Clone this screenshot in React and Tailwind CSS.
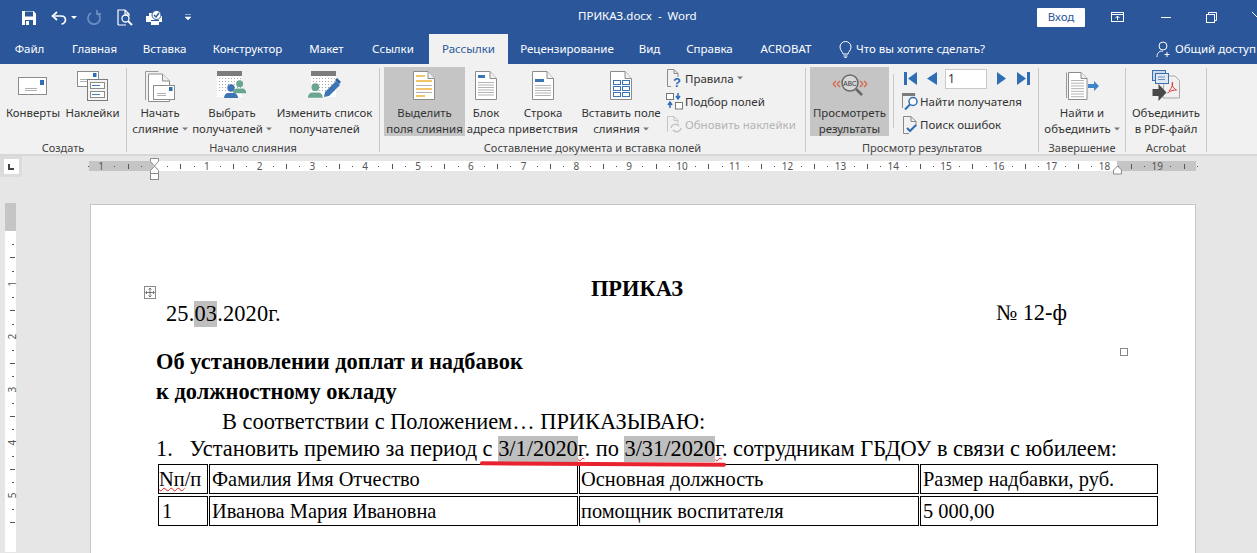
import React from "react";

const Caret = () => (
  <svg width="6" height="4" viewBox="0 0 6 4" className="inline-block ml-[3px] mb-[2px]"><path d="M0 0.5h6L3 3.5z" fill="#7a7a7a" /></svg>
);

const Sep = () => <div className="w-px h-[84px] mt-[4px] bg-[#c8c8c8] shrink-0" />;

const Group = ({ w, label, children }) => (
  <>
    <div className="flex flex-col shrink-0 h-full" style={{ width: w }}>
      <div className="flex h-[76px] pt-[3px] shrink-0">{children}</div>
      <div className="text-center text-[11px] leading-[15px] text-[#444] whitespace-nowrap shrink-0">{label}</div>
    </div>
    <Sep />
  </>
);

const Big = ({ w, icon, lines, caret, active }) => (
  <div className={`flex flex-col items-center shrink-0 h-[69px] ${active ? "bg-[#c5c5c5]" : ""}`} style={{ width: w }}>
    <div className="h-[38px] flex items-center justify-center shrink-0">{icon}</div>
    {lines.map((l, i) => (
      <div key={i} className="leading-[16px] text-[11.4px] text-[#333] whitespace-nowrap">
        {l}
        {caret && i === lines.length - 1 ? <Caret /> : null}
      </div>
    ))}
  </div>
);

const Small = ({ icon, text, caret, dim, tight }) => (
  <div className={`flex items-center h-[23px] text-[11.5px] whitespace-nowrap ${dim ? "text-[#b4b4b4]" : "text-[#333]"}`}>
    <div className={`${tight ? "w-[18px]" : "w-[20px]"} flex justify-center shrink-0`}>{icon}</div>
    <span className="ml-[1px]">{text}</span>
    {caret ? <Caret /> : null}
  </div>
);

const Env = ({ x = 0, y = 0 }) => (
  <g transform={`translate(${x} ${y})`}>
    <rect x=".5" y=".5" width="28" height="17" fill="#fff" stroke="#8c8c8c" />
    <rect x="22" y="3" width="4" height="5" fill="#2f6eb5" />
    <path d="M7 11.5h12M7 13.5h12" stroke="#b0b0b0" />
  </g>
);

const IEnvelope = () => <svg width="30" height="19"><Env /></svg>;

const ILabels = () => (
  <svg width="31" height="30">
    <rect x=".5" y=".5" width="21" height="15" fill="#fff" stroke="#8c8c8c" />
    <rect x="16" y="2" width="3.5" height="4" fill="#2f6eb5" />
    <path d="M3 8.5h10M3 10.5h10" stroke="#b0b0b0" />
    <rect x="10.5" y="8.5" width="20" height="21" fill="#f4f4f4" stroke="#7c7c7c" />
    <rect x="13.5" y="11.5" width="14" height="6" fill="#fff" stroke="#8c8c8c" />
    <rect x="13.5" y="20.5" width="14" height="6" fill="#fff" stroke="#8c8c8c" />
    <path d="M15 14.5h8M15 23.5h8" stroke="#3d7cc0" />
  </svg>
);

const IStart = () => (
  <svg width="31" height="31">
    <path d="M.5 29V.5h13" fill="none" stroke="#9a9a9a" />
    <path d="M3.5 30.5V3h14l7 7v20.5z" fill="#fff" stroke="#8c8c8c" />
    <path d="M17.5 3v7h7" fill="#eee" stroke="#8c8c8c" />
    <g transform="translate(8 14)"><rect x=".5" y=".5" width="21" height="14" fill="#fff" stroke="#8c8c8c" /><rect x="16" y="2" width="3.5" height="4" fill="#2f6eb5" /><path d="M4 8.5h9M4 10.5h9" stroke="#b0b0b0" /></g>
  </svg>
);

const Dots = ({ w }) => {
  const d = [];
  for (let r = 0; r < 5; r++) for (let c = 0; c < w; c++) d.push(<rect key={`${r}${c}`} x={2 + c * 3} y={7 + r * 3} width="1" height="1" fill="#a8a8a8" />);
  return <>{d}</>;
};

const Person = ({ x, y, color, s = 1 }) => (
  <g transform={`translate(${x} ${y}) scale(${s})`}>
    <circle cx="7" cy="4" r="3.7" fill={color} />
    <path d="M0 14c0-3 2-5 4-5h6c2 0 4 2 4 5z" fill={color} />
  </g>
);

const ISelect = () => (
  <svg width="30" height="30">
    <rect x="0" y="0" width="25" height="26" fill="#fff" stroke="none" />
    <rect x="0" y="0" width="25" height="5" fill="#7c7c7c" />
    <Dots w={8} />
    <Person x="16" y="9" color="#6aa68f" s="0.95" />
    <Person x="7" y="13" color="#3d74b4" />
  </svg>
);

const IEdit = () => (
  <svg width="33" height="30">
    <rect x="3" y="0" width="25" height="26" fill="#fff" />
    <rect x="3" y="0" width="25" height="5" fill="#7c7c7c" />
    <g transform="translate(3 0)"><Dots w={8} /></g>
    <Person x="0" y="12" color="#6aa68f" s="1.05" />
    <path d="M17 21l11-11 4 4-11 11-5 1z" fill="#3d74b4" />
    <path d="M27 9l2-2 4 4-2 2z" fill="#2f5f9e" />
  </svg>
);

const Doc = ({ children, w = 22, h = 29 }) => (
  <svg width={w + 1} height={h + 1}>
    <path d={`M.5 .5H${w - 7}L${w - .5} 7.5V${h - .5}H.5z`} fill="#fff" stroke="#8c8c8c" />
    <path d={`M${w - 7} .5V7.5H${w - .5}`} fill="#f0f0f0" stroke="#8c8c8c" />
    {children}
  </svg>
);

const Lines = ({ y, n, x = 4, w = 14, c = "#b4b4b4", step = 2.5 }) => {
  const r = [];
  for (let i = 0; i < n; i++) r.push(<rect key={i} x={x} y={y + i * step} width={w} height="1" fill={c} />);
  return <>{r}</>;
};

const IHighlight = () => (
  <Doc>
    <rect x="3" y="4" width="9" height="2" fill="#f3c469" /><rect x="3" y="9" width="16" height="2" fill="#f3c469" />
    <rect x="3" y="14" width="16" height="1" fill="#b4b4b4" /><rect x="3" y="17" width="16" height="2" fill="#f3c469" />
    <rect x="3" y="21" width="16" height="1" fill="#b4b4b4" /><rect x="3" y="24" width="9" height="2" fill="#f3c469" />
  </Doc>
);
const IBlock = () => (
  <Doc>
    <rect x="3" y="4" width="7" height="3" fill="#3d74b4" />
    <Lines y={11} n={6} x={3} w={16} />
  </Doc>
);
const IGreet = () => (
  <Doc>
    <rect x="3" y="8" width="9" height="3" fill="#3d74b4" />
    <Lines y={14} n={5} x={3} w={16} />
  </Doc>
);
const IField = () => (
  <Doc>
    {[9, 15, 21].map((y) => [3, 12].map((x) => <rect key={`${x}${y}`} x={x + .5} y={y + .5} width="7" height="4" fill="#fff" stroke="#3d74b4" />))}
  </Doc>
);

const IRules = () => (
  <svg width="16" height="19" className="overflow-visible">
    <path d="M1.5 17.5V.5H8l4 4V8" fill="none" stroke="#8c8c8c" />
    <path d="M8 .5v4h4" fill="none" stroke="#8c8c8c" />
    <path d="M1.5 17.5H5" stroke="#8c8c8c" />
    <text x="7" y="18" fontFamily="Liberation Sans" fontWeight="700" fontSize="13" fill="#2f6eb5">?</text>
  </svg>
);
const IMatch = () => (
  <svg width="17" height="17">
    <rect x=".5" y=".5" width="7" height="6" fill="#fff" stroke="#777" />
    <rect x="9.5" y="9.5" width="7" height="6.5" fill="#fff" stroke="#777" />
    <path d="M12 0v5M10 3l2 3 2-3M4 15v-5M2 12l2-3 2 3" fill="none" stroke="#2f6eb5" strokeWidth="1.5" />
  </svg>
);
const IRefresh = () => (
  <svg width="16" height="17">
    <path d="M1.5 15.5V.5H8l4 4v3M8 .5v4h4" fill="none" stroke="#c4c4c4" />
    <path d="M5 12a4.500 4.500 0 0 1 8-2M15 12a4.500 4.500 0 0 1-8 2" fill="none" stroke="#c4c4c4" strokeWidth="1.500" />
  </svg>
);
const IPreview = () => (
  <svg width="36" height="24" className="overflow-visible">
    <path d="M1 10l3-3M1 10l3 3M5 10l3-3M5 10l3 3M35 10l-3-3M35 10l-3 3M31 10l-3-3M31 10l-3 3" stroke="#d9603c" strokeWidth="1.200" fill="none" />
    <circle cx="18" cy="9" r="8" fill="#d8d8d8" stroke="#6a6a6a" strokeWidth="1.500" />
    <text x="18" y="11.500" textAnchor="middle" fontFamily="Liberation Sans" fontSize="6.500" fill="#333">ABC</text>
    <path d="M24 15l6 6" stroke="#666" strokeWidth="2.500" />
  </svg>
);
const IFindRec = () => (
  <svg width="17" height="18">
    <path d="M.5 15V1.500h13" fill="none" stroke="#888" />
    <rect x="0" y="0" width="13" height="3" fill="#7c7c7c" />
    <circle cx="11" cy="8.500" r="4" fill="#fff" stroke="#2f6eb5" strokeWidth="1.500" />
    <path d="M8 11.500l-5 5" stroke="#2f6eb5" strokeWidth="2" />
  </svg>
);
const ICheck = () => (
  <svg width="15" height="18">
    <path d="M.5 17.500V.5H8l5 5v5M8 .5v5h5M.5 17.500H6" fill="none" stroke="#888" />
    <path d="M4 12l3 3 6-6" fill="none" stroke="#2f6eb5" strokeWidth="2" />
  </svg>
);
const IFind = () => (
  <svg width="33" height="28">
    <path d="M.5 26V.5" stroke="#999" />
    <path d="M2.500 27.500V.5H15l6 6v21z" fill="#fff" stroke="#8c8c8c" />
    <path d="M15 .5v6h6" fill="#eee" stroke="#8c8c8c" />
    <Lines y={8} n={7} x={5} w={13} step={2.700} />
    <path d="M22 12h6v-3l5 5-5 5v-3h-6z" fill="#3d85c6" />
  </svg>
);
const IPdf = () => (
  <svg width="28" height="32">
    <path d="M12 6h11l4.500 4.500V28H11z" fill="#f0f0f0" stroke="#a8a8a8" />
    <rect x=".5" y=".5" width="13" height="10" fill="#c7d9ee" stroke="#3d6fa8" />
    <rect x="3.500" y="3.500" width="13" height="10" fill="#dce8f5" stroke="#3d6fa8" />
    <path d="M6 7h7M6 9.500h7" stroke="#6a8db5" />
    <path d="M17 21c3-3 4-7 3.500-9-1 2 0 6 4 8-3 0-6 .5-9 3" fill="none" stroke="#e03b3b" />
    <path d="M.5 19h6v-5l8 8.500-8 8.500v-5h-6z" fill="#4a4a4a" />
  </svg>
);

const Ruler = () => {
  const items = [];
  for (let i = -5; i <= 79; i++) {
    const x = 65 + 13.2 * i;
    if (i === 0) continue;
    if (i % 4 === 0) items.push(<text key={i} x={x} y="9" textAnchor="middle" fontSize="10" fontFamily="Noto Sans" fill="#555">{Math.abs(i / 4)}</text>);
    else if (i % 2 === 0) items.push(<rect key={i} x={Math.round(x)} y="3" width="1" height="5" fill="#555" />);
    else items.push(<rect key={i} x={Math.round(x)} y="5" width="1" height="1" fill="#555" />);
  }
  return (
    <div className="relative w-[1107px] h-[10px] mt-[5px] flex bg-white">
      <div className="w-[64px] bg-[#c5c5c5]" />
      <div className="w-[964px]" />
      <div className="w-[79px] bg-[#c5c5c5]" />
      <svg width="1107" height="10" className="absolute left-0 top-0 overflow-visible">{items}</svg>
      <svg width="11" height="24" className="absolute left-[60px] top-[-3px]">
        <path d="M1.500 .5h8v3L5.500 8 1.500 3.500zM5.500 8l4 4.500v3h-8v-3z" fill="#fff" stroke="#8a8a8a" />
        <rect x="1.500" y="15.500" width="8" height="6" fill="#fff" stroke="#8a8a8a" />
      </svg>
      <svg width="11" height="10" className="absolute left-[1023px] top-[4px]">
        <path d="M1.500 9V5l4-4 4 4v4z" fill="#fff" stroke="#8a8a8a" />
      </svg>
    </div>
  );
};

const VRuler = () => {
  const items = [];
  for (let i = 0; i <= 22; i++) {
    const y = 230 - 204 + 0 + 13.22 * i + 2;
    const n = i / 4 + 0;
    if (i % 4 === 0 && i > 0) items.push(<text key={i} x="0" y="0" transform={`translate(7 ${y}) rotate(-90)`} textAnchor="middle" dominantBaseline="central" fontSize="10" fontFamily="Noto Sans" fill="#555">{n}</text>);
    else if (i % 2 === 0 && i > 0) items.push(<rect key={i} x="5" y={Math.round(y)} width="5" height="1" fill="#555" />);
    else if (i > 0) items.push(<rect key={i} x="7" y={Math.round(y)} width="2" height="1" fill="#555" />);
  }
  return (
    <div className="relative w-[11px] h-[349px] ml-[5px] bg-white shrink-0">
      <div className="h-[28px] bg-[#c5c5c5]" />
      <svg width="11" height="349" className="absolute left-0 top-0 overflow-visible">{items}</svg>
    </div>
  );
};

const Hl = ({ children }) => <span className="bg-[#bfbfbf] inline-block leading-[26px]">{children}</span>;

const Tab = ({ w, children, active }) => (
  <div className={`h-[30px] flex items-center justify-center text-[11.5px] whitespace-nowrap shrink-0 ${active ? "bg-[#f1f1f1] text-[#2b579a]" : "text-white"}`} style={{ width: w }}>
    {children}
  </div>
);

const Cell = ({ w, children, pl }) => (
  <td className={`border border-black p-0 h-[30px] whitespace-nowrap ${pl}`} style={{ width: w }}>{children}</td>
);

export default function App() {
  return (
    <div className="w-[1257px] h-[553px] overflow-hidden flex flex-col bg-[#e6e6e6] relative font-['Noto_Sans',sans-serif]">
      {/* Title bar */}
      <div className="bg-[#2b579a] h-[34px] flex items-center relative shrink-0">
        <div className="flex items-center ml-[21px] mt-[1px]">
          <svg width="16" height="16" viewBox="0 0 16 16"><path d="M1 1h11.500L15 3.500V15H1z" fill="#fff" /><rect x="4" y="1.500" width="8" height="5" fill="#2b579a" /><rect x="4" y="10" width="8" height="5" fill="#2b579a" /><rect x="5" y="11" width="3" height="4" fill="#fff" /></svg>
          <svg width="16" height="14" viewBox="0 0 16 14" className="ml-[14px]"><path d="M6 1L1.500 5 6 9" fill="none" stroke="#fff" strokeWidth="1.700" /><path d="M2 5h8c3 0 4.500 2 4.500 4s-2 4-4 4" fill="none" stroke="#fff" strokeWidth="1.700" /></svg>
          <svg width="6" height="4" className="ml-[4px]"><path d="M0 0h6L3 3z" fill="#fff" /></svg>
          <svg width="15" height="15" viewBox="0 0 15 15" className="ml-[10px]"><path d="M10 3a6 6 0 1 1-6 0M10 0v4h4" fill="none" stroke="#6a8cbf" strokeWidth="1.800" /></svg>
          <svg width="16" height="17" viewBox="0 0 16 17" className="ml-[15px]"><path d="M1 16V1h7l4 4v2M8 1v4h4M1 16h8" fill="none" stroke="#fff" strokeWidth="1.200" /><circle cx="8.500" cy="9.500" r="3.500" fill="none" stroke="#fff" strokeWidth="1.300" /><path d="M11 12l4 4" stroke="#fff" strokeWidth="1.800" /></svg>
          <svg width="17" height="16" viewBox="0 0 17 16" className="ml-[13px]"><path d="M0 6h3V3h10v3h3v6h-3v3H5v-3H0z" fill="#fff" /><rect x="5" y="10" width="8" height="1" fill="#2b579a" /><circle cx="10.500" cy="5" r="4.500" fill="#fff" stroke="#2b579a" /><path d="M8 5l2 2 3-4" fill="none" stroke="#2b579a" strokeWidth="1.400" /></svg>
          <svg width="6" height="7" className="ml-[22px]"><path d="M0 .5h6M0 3h6L3 6z" fill="#fff" stroke="#fff" strokeWidth=".5" /></svg>
        </div>
        <div className="absolute left-[578px] top-[8px] text-[11.5px] leading-[16px] text-white whitespace-pre">ПРИКАЗ.docx  -  Word</div>
        <div className="ml-auto flex items-center">
          <div className="w-[48px] h-[19px] bg-white rounded-[1px] text-[#2b579a] text-[11.5px] flex items-center justify-center mr-[26px]">Вход</div>
          <svg width="14" height="11" className="mr-[36px]"><rect x=".5" y=".5" width="12" height="9" fill="none" stroke="#fff" /><path d="M.5 2.500h12M6.500 8V4M4.500 6l2-2 2 2" fill="none" stroke="#fff" /></svg>
          <div className="w-[10px] h-px bg-white mr-[35px]" />
          <svg width="11" height="11" className="mr-[35px]"><path d="M2.500 2.500V.5h8v8h-2" fill="none" stroke="#fff" /><rect x=".5" y="2.500" width="8" height="8" fill="none" stroke="#fff" /></svg>
          <svg width="5" height="11" className="block"><path d="M0 0l10 10" stroke="#fff" /></svg>
        </div>
      </div>
      {/* Tabs */}
      <div className="bg-[#2b579a] h-[30px] flex shrink-0">
        <Tab w="59px">Файл</Tab>
        <Tab w="71px">Главная</Tab>
        <Tab w="69px">Вставка</Tab>
        <Tab w="97px">Конструктор</Tab>
        <Tab w="61px">Макет</Tab>
        <Tab w="72px">Ссылки</Tab>
        <Tab w="79px" active>Рассылки</Tab>
        <Tab w="118px">Рецензирование</Tab>
        <Tab w="47px">Вид</Tab>
        <Tab w="73px">Справка</Tab>
        <Tab w="80px">ACROBAT</Tab>
        <div className="flex items-center text-[11.5px] text-white whitespace-nowrap ml-[13px]">
          <svg width="13" height="17" viewBox="0 0 13 17"><path d="M4 13c0-2-3-3.500-3-7a5.500 5.500 0 0 1 11 0c0 3.500-3 5-3 7zM4.500 15h4M5.500 16.500h2" fill="none" stroke="#fff" /></svg>
          <span className="ml-[4px]">Что вы хотите сделать?</span>
        </div>
        <div className="ml-auto flex items-center text-[11.5px] text-white whitespace-nowrap">
          <svg width="16" height="17" viewBox="0 0 16 17" className="mr-[3px] shrink-0"><circle cx="7" cy="5" r="4" fill="none" stroke="#fff" /><path d="M1 16c0-4 2-6 6-6M11 11v5M8.500 13.500h5" fill="none" stroke="#fff" /></svg>
          <span className="w-[82px]">Общий доступ</span>
        </div>
      </div>
      {/* Ribbon */}
      <div className="bg-[#f1f1f1] h-[92px] flex border-b-2 border-[#d8d8d8] shrink-0">
        <Group w="126px" label="Создать">
          <div className="w-[3px]" />
          <Big w="60px" icon={<IEnvelope />} lines={["Конверты"]} />
          <Big w="59px" icon={<ILabels />} lines={["Наклейки"]} />
        </Group>
        <Group w="252px" label="Начало слияния">
          <div className="w-[2px]" />
          <Big w="62px" icon={<IStart />} lines={["Начать", "слияние"]} caret />
          <div className="w-[2px]" />
          <Big w="78px" icon={<ISelect />} lines={["Выбрать", "получателей"]} caret />
          <div className="w-[1px]" />
          <Big w="105px" icon={<IEdit />} lines={["Изменить список", "получателей"]} />
        </Group>
        <Group w="425px" label="Составление документа и вставка полей">
          <div className="w-[4px]" />
          <Big w="81px" active icon={<IHighlight />} lines={["Выделить", "поля слияния"]} />
          <Big w="42px" icon={<IBlock />} lines={["Блок", "адреса"]} />
          <Big w="72px" icon={<IGreet />} lines={["Строка", "приветствия"]} />
          <div className="w-[2px]" />
          <Big w="80px" icon={<IField />} lines={["Вставить поле", "слияния"]} caret />
          <div className="w-[3px]" />
          <div className="flex flex-col">
            <Small icon={<IRules />} text="Правила" caret />
            <Small icon={<IMatch />} text="Подбор полей" />
            <Small dim icon={<IRefresh />} text="Обновить наклейки" />
          </div>
        </Group>
        <Group w="232px" label="Просмотр результатов">
          <div className="w-[4px]" />
          <Big w="79px" active icon={<IPreview />} lines={["Просмотреть", "результаты"]} />
          <div className="w-px h-[54px] mt-[7px] ml-[4px] bg-[#c8c8c8]" />
          <div className="flex flex-col ml-[7px]">
            <div className="flex items-center h-[23px]">
              <svg width="13" height="13" className="ml-[3px]"><rect x="0" y="0" width="3" height="13" fill="#2f6eb5" /><path d="M13 0v13L4 6.500z" fill="#2f6eb5" /></svg>
              <svg width="10" height="13" className="ml-[10px]"><path d="M10 0v13L0 6.500z" fill="#2f6eb5" /></svg>
              <div className="w-[42px] h-[20px] ml-[8px] bg-white border border-[#c8c8c8] text-[12px] leading-[18px] pl-[2px] text-[#333]">1</div>
              <svg width="9" height="13" className="ml-[10px]"><path d="M0 0v13L9 6.500z" fill="#2f6eb5" /></svg>
              <svg width="13" height="13" className="ml-[11px]"><path d="M0 0v13L9 6.500z" fill="#2f6eb5" /><rect x="10" y="0" width="3" height="13" fill="#2f6eb5" /></svg>
            </div>
            <Small tight icon={<IFindRec />} text="Найти получателя" />
            <Small tight icon={<ICheck />} text="Поиск ошибок" />
          </div>
        </Group>
        <Group w="86px" label="Завершение">
          <Big w="86px" icon={<IFind />} lines={["Найти и", "объединить"]} caret />
        </Group>
        <Group w="80px" label="Acrobat">
          <Big w="80px" icon={<IPdf />} lines={["Объединить", "в PDF-файл"]} />
        </Group>
      </div>
      {/* Ruler row */}
      <div className="flex h-[48px] shrink-0">
        <div className="w-[22px] h-[21px] bg-[#dcdcdc] flex items-center justify-center">
          <div className="w-[15px] h-[15px] bg-white flex items-center justify-center">
            <div className="w-[6px] h-[6px] border-l-2 border-b-2 border-[#444]" />
          </div>
        </div>
        <div className="ml-[67px]"><Ruler /></div>
      </div>
      {/* Doc */}
      <div className="flex flex-1 min-h-0">
        <div className="-mt-px"><VRuler /></div>
        <div className="relative ml-[74px] w-[1106px] h-[400px] bg-white border border-[#c6c6c6] pl-[65px] pt-[72px] font-['Liberation_Serif',serif] text-[22.4px] text-black">
          <div className="h-[24px] leading-[24px] font-bold text-center pr-[77px]">ПРИКАЗ</div>
          <div className="h-[24px] leading-[24px] flex justify-between w-[901px] ml-[10px]">
            <span className="tracking-[0.15px]">25.<Hl>03</Hl>.2020г.</span>
            <span>№ 12-ф</span>
          </div>
          <div className="h-[31px] mt-[21px] leading-[31px] font-bold">Об установлении доплат и надбавок</div>
          <div className="h-[30px] leading-[30px] font-bold">к должностному окладу</div>
          <div className="h-[29px] leading-[29px] pl-[66px]">В соответствии с Положением… ПРИКАЗЫВАЮ:</div>
          <div className="h-[26px] leading-[26px] whitespace-pre">1.   Установить премию за период с <Hl>3/1/2020</Hl><span className="underline decoration-wavy decoration-[#e02020] decoration-1 underline-offset-1">г</span>. по <Hl>3/31/2020</Hl><span className="underline decoration-wavy decoration-[#e02020] decoration-1 underline-offset-1">г</span>. сотрудникам ГБДОУ в связи с юбилеем:</div>
          <table className="ml-px table-fixed border-separate border-spacing-x-px border-spacing-y-[2px] text-[20.4px] leading-[28px]">
            <tbody>
              <tr>
                <Cell w="50px"><span className="underline decoration-wavy decoration-[#e02020] decoration-1">Nп</span>/п</Cell>
                <Cell w="369px" pl="pl-[2px]">Фамилия Имя Отчество</Cell>
                <Cell w="340px" pl="pl-[1px]">Основная должность</Cell>
                <Cell w="238px" pl="pl-[2px]">Размер надбавки, руб.</Cell>
              </tr>
              <tr>
                <Cell w="50px" pl="pl-[3px]">1</Cell>
                <Cell w="369px" pl="pl-[2px]">Иванова Мария Ивановна</Cell>
                <Cell w="340px" pl="pl-[1px]">помощник воспитателя</Cell>
                <Cell w="238px" pl="pl-[2px]">5 000,00</Cell>
              </tr>
            </tbody>
          </table>
          {/* overlays */}
          <svg width="12" height="13" className="absolute left-[53px] top-[81px]">
            <rect x=".5" y=".5" width="11" height="12" fill="#fff" stroke="#8a8a8a" />
            <path d="M6 2.500v8M2 6.500h8M4.500 3.500L6 2l1.500 1.500M4.500 9.500L6 11l1.500-1.500M3 5L1.500 6.500 3 8M9 5l1.500 1.500L9 8" fill="none" stroke="#555" strokeWidth=".8" />
          </svg>
          <div className="absolute left-[1029px] top-[143px] w-[8px] h-[8px] bg-white border border-[#8a8a8a]" />
          <div className="absolute left-[389px] top-[257px] w-[246px] h-[4px] bg-[#e8232f] rounded-full rotate-[0.3deg]" />
        </div>
      </div>
    </div>
  );
}
